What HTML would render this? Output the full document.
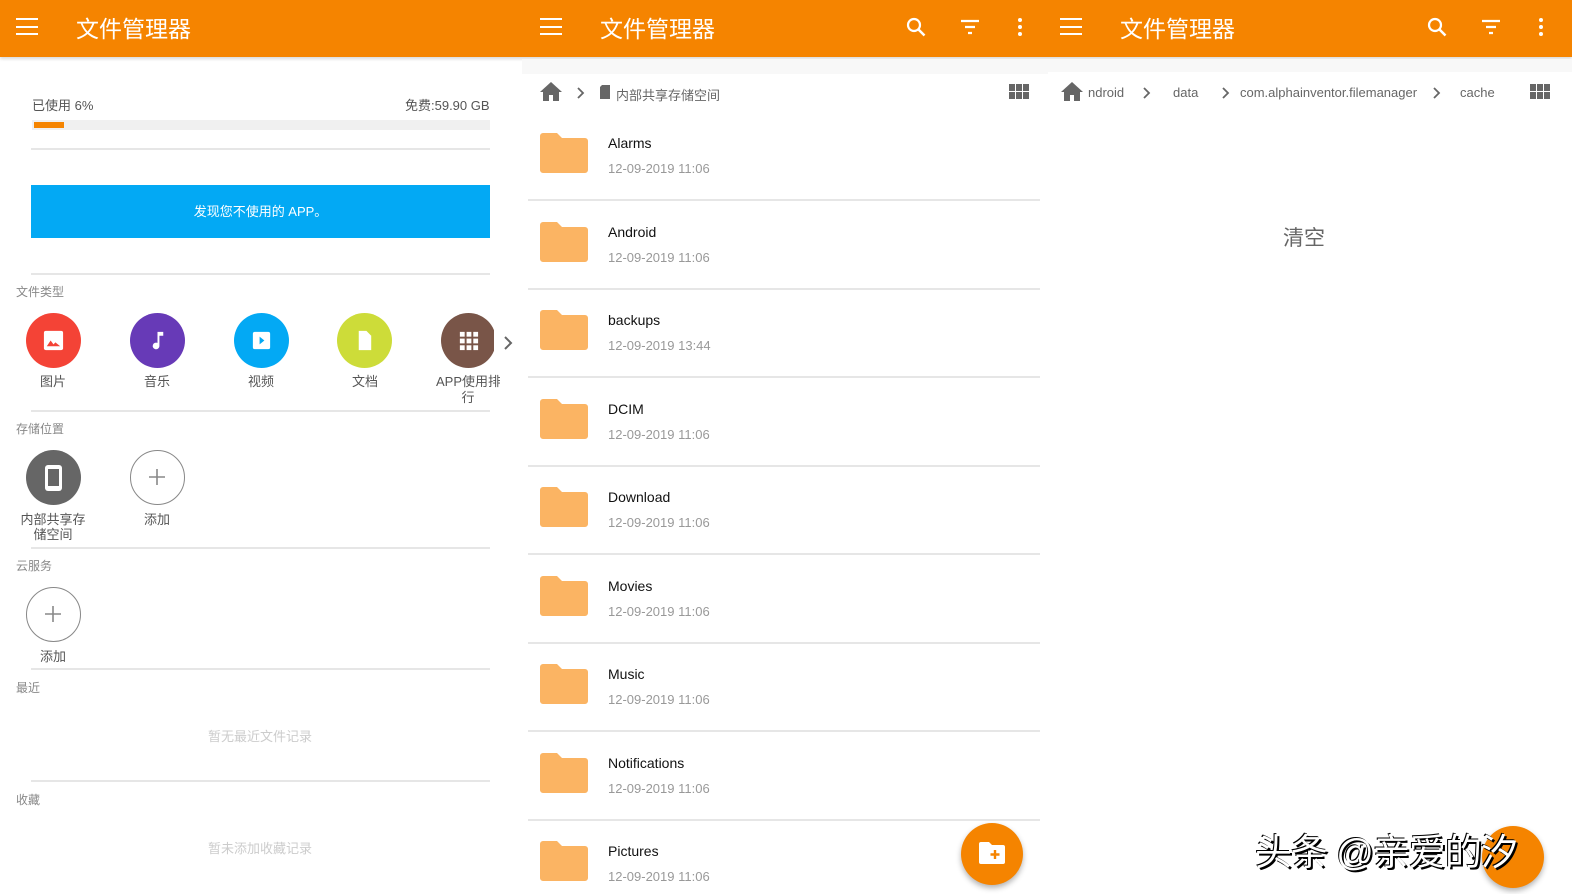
<!DOCTYPE html>
<html><head><meta charset="utf-8"><style>
*{margin:0;padding:0;box-sizing:border-box}
body{width:1572px;height:894px;background:#fff;font-family:"Liberation Sans","Noto Sans CJK SC",sans-serif;position:relative;overflow:hidden}
.a{position:absolute}
.hdr{position:absolute;top:0;height:57px;background:#f58400}
.ttl{position:absolute;top:10px;color:#fff;font-size:23px}
.ham{position:absolute;top:18px;width:22px;height:17px;border-top:2.5px solid #fff;border-bottom:2.5px solid #fff}
.ham:after{content:"";position:absolute;left:0;right:0;top:5.5px;border-top:2.5px solid #fff}
.line{position:absolute;height:2px;background:#e6e6e6}
.circ{position:absolute;width:55px;height:55px;border-radius:50%}
.lbl{position:absolute;font-size:13px;color:#555;text-align:center;width:90px;line-height:15px}
.sec{position:absolute;left:16px;font-size:12px;color:#888}
.d{position:absolute;left:608px;font-size:13px;color:#999}
.fold{position:absolute;left:540px;width:48px;height:40px}
</style></head><body>
<div class="hdr" style="left:0;width:1572px;box-shadow:0 2px 3px rgba(0,0,0,.15)"></div>
<div class="ham" style="left:16px"></div><div class="ttl" style="left:76px">文件管理器</div>
<div class="ham" style="left:540px"></div><div class="ttl" style="left:600px">文件管理器</div>
<div class="ham" style="left:1060px"></div><div class="ttl" style="left:1120px">文件管理器</div>
<svg class="a" style="left:904px;top:15px" width="24" height="24" viewBox="0 0 24 24"><circle cx="10" cy="10" r="6" fill="none" stroke="#fff" stroke-width="2.2"/><path d="M14.5 14.5l6 6" stroke="#fff" stroke-width="2.5"/></svg>
<svg class="a" style="left:958px;top:15px" width="24" height="24" viewBox="0 0 24 24"><path d="M3 6h18M7 12h10M10 18h4" stroke="#fff" stroke-width="2.2"/></svg>
<svg class="a" style="left:1008px;top:15px" width="24" height="24" viewBox="0 0 24 24"><circle cx="12" cy="5" r="2" fill="#fff"/><circle cx="12" cy="12" r="2" fill="#fff"/><circle cx="12" cy="19" r="2" fill="#fff"/></svg>
<svg class="a" style="left:1425px;top:15px" width="24" height="24" viewBox="0 0 24 24"><circle cx="10" cy="10" r="6" fill="none" stroke="#fff" stroke-width="2.2"/><path d="M14.5 14.5l6 6" stroke="#fff" stroke-width="2.5"/></svg>
<svg class="a" style="left:1479px;top:15px" width="24" height="24" viewBox="0 0 24 24"><path d="M3 6h18M7 12h10M10 18h4" stroke="#fff" stroke-width="2.2"/></svg>
<svg class="a" style="left:1529px;top:15px" width="24" height="24" viewBox="0 0 24 24"><circle cx="12" cy="5" r="2" fill="#fff"/><circle cx="12" cy="12" r="2" fill="#fff"/><circle cx="12" cy="19" r="2" fill="#fff"/></svg>
<div class="a" style="left:522px;top:59px;width:526px;height:15px;background:#f8f8f8"></div>
<div class="a" style="left:1048px;top:59px;width:524px;height:13px;background:#f8f8f8"></div>

<div class="a" style="left:32px;top:95px;font-size:13px;color:#555">已使用 6%</div>
<div class="a" style="left:405px;top:95px;font-size:13px;color:#555">免费:59.90 GB</div>
<div class="a" style="left:32px;top:120px;width:458px;height:10px;background:#f0f0f0"></div>
<div class="a" style="left:34px;top:122px;width:30px;height:6px;background:#f58400"></div>
<div class="line" style="left:31px;top:148px;width:459px"></div>
<div class="a" style="left:31px;top:185px;width:459px;height:53px;background:#03a9f4;color:#fff;font-size:13px;text-align:center;line-height:53px">发现您不使用的 APP。</div>
<div class="line" style="left:31px;top:273px;width:459px"></div>
<div class="sec" style="top:283px">文件类型</div>
<div class="circ" style="left:26px;top:313px;background:#f44336"></div>
<svg class="a" style="left:42px;top:329px" width="23" height="23" viewBox="0 0 24 24"><rect x="2" y="2" width="20" height="20" rx="2" fill="#fff"/><path d="M5 18l4-6 3 4 2-2 5 4z" fill="#f44336"/></svg>
<div class="circ" style="left:130px;top:313px;background:#673ab7"></div>
<svg class="a" style="left:146px;top:329px" width="23" height="23" viewBox="0 0 24 24"><path d="M12 3v11.5A3.5 3.5 0 1 0 14 18V7h4V3z" fill="#fff"/></svg>
<div class="circ" style="left:234px;top:313px;background:#03a9f4"></div>
<svg class="a" style="left:250px;top:329px" width="23" height="23" viewBox="0 0 24 24"><rect x="3" y="3" width="18" height="18" rx="2" fill="#fff"/><path d="M10 8l5 4-5 4z" fill="#03a9f4"/></svg>
<div class="circ" style="left:337px;top:313px;background:#cddc39"></div>
<svg class="a" style="left:353px;top:329px" width="23" height="23" viewBox="0 0 24 24"><path d="M6 2h8l5 5v15H6z" fill="#fff"/></svg>
<div class="circ" style="left:441px;top:313px;background:#795548"></div>
<svg class="a" style="left:457px;top:329px" width="23" height="23" viewBox="0 0 24 24" fill="#fff"><rect x="3" y="3" width="5" height="5"/><rect x="10" y="3" width="5" height="5"/><rect x="17" y="3" width="5" height="5"/><rect x="3" y="10" width="5" height="5"/><rect x="10" y="10" width="5" height="5"/><rect x="17" y="10" width="5" height="5"/><rect x="3" y="17" width="5" height="5"/><rect x="10" y="17" width="5" height="5"/><rect x="17" y="17" width="5" height="5"/></svg>
<div class="a" style="left:494px;top:300px;width:28px;height:110px;background:#fff"></div>
<svg class="a" style="left:500px;top:334px" width="16" height="18" viewBox="0 0 16 18"><path d="M5 3l6 6-6 6" fill="none" stroke="#666" stroke-width="2"/></svg>
<div class="lbl" style="left:8px;top:374px">图片</div>
<div class="lbl" style="left:112px;top:374px">音乐</div>
<div class="lbl" style="left:216px;top:374px">视频</div>
<div class="lbl" style="left:320px;top:374px">文档</div>
<div class="lbl" style="left:436px;top:374px;width:64px;overflow:hidden;white-space:nowrap">APP使用排</div>
<div class="lbl" style="left:423px;top:390px">行</div>
<div class="line" style="left:31px;top:410px;width:459px"></div>
<div class="sec" style="top:420px">存储位置</div>
<div class="circ" style="left:26px;top:450px;background:#666"></div>
<div class="a" style="left:45px;top:465px;width:17px;height:26px;border-radius:3px;background:#fff"></div>
<div class="a" style="left:48px;top:469px;width:11px;height:17px;background:#666"></div>
<div class="circ" style="left:130px;top:450px;border:1.5px solid #888"></div>
<svg class="a" style="left:147px;top:467px" width="20" height="20" viewBox="0 0 20 20"><path d="M10 2v16M2 10h16" stroke="#888" stroke-width="1.6"/></svg>
<div class="lbl" style="left:8px;top:512px">内部共享存<br>储空间</div>
<div class="lbl" style="left:112px;top:512px">添加</div>
<div class="line" style="left:31px;top:547px;width:459px"></div>
<div class="sec" style="top:557px">云服务</div>
<div class="circ" style="left:26px;top:587px;border:1.5px solid #888"></div>
<svg class="a" style="left:43px;top:604px" width="20" height="20" viewBox="0 0 20 20"><path d="M10 2v16M2 10h16" stroke="#888" stroke-width="1.6"/></svg>
<div class="lbl" style="left:8px;top:649px">添加</div>
<div class="line" style="left:31px;top:668px;width:459px"></div>
<div class="sec" style="top:679px">最近</div>
<div class="a" style="left:208px;top:726px;font-size:13px;color:#ccc">暂无最近文件记录</div>
<div class="line" style="left:31px;top:780px;width:459px"></div>
<div class="sec" style="top:791px">收藏</div>
<div class="a" style="left:208px;top:838px;font-size:13px;color:#ccc">暂未添加收藏记录</div>

<svg class="a" style="left:539px;top:81px" width="24" height="22" viewBox="0 0 24 22"><path d="M12 1L1 11h3v9h6v-6h4v6h6v-9h3z" fill="#666"/></svg>
<svg class="a" style="left:575px;top:86px" width="12" height="14" viewBox="0 0 12 14"><path d="M3 2l5 5-5 5" fill="none" stroke="#666" stroke-width="1.8"/></svg>
<svg class="a" style="left:599px;top:85px" width="12" height="14" viewBox="0 0 12 14"><path d="M3 0h8v14H1V2z" fill="#666"/></svg>
<div class="a" style="left:616px;top:85px;font-size:13px;color:#666">内部共享存储空间</div>
<svg class="a" style="left:1009px;top:84px" width="20" height="16" viewBox="0 0 20 16" fill="#666"><rect x="0" y="0" width="6" height="7"/><rect x="7" y="0" width="6" height="7"/><rect x="14" y="0" width="6" height="7"/><rect x="0" y="8" width="6" height="7"/><rect x="7" y="8" width="6" height="7"/><rect x="14" y="8" width="6" height="7"/></svg>

<div id="rows"></div>
<script>
var n=["Alarms","Android","backups","DCIM","Download","Movies","Music","Notifications","Pictures"];
var dt=["11:06","11:06","13:44","11:06","11:06","11:06","11:06","11:06","11:06"];
var h="";
for(var i=0;i<9;i++){var y=142+i*88.5;
h+='<svg class="fold" style="top:'+(y-9)+'px" viewBox="0 0 48 40"><path d="M3 0h14l5 5h23a3 3 0 0 1 3 3v29a3 3 0 0 1-3 3H3a3 3 0 0 1-3-3V3a3 3 0 0 1 3-3z" fill="#fbb463"/></svg>';
h+='<div class="a" style="left:608px;top:'+(y-7)+'px;font-size:14px;color:#111">'+n[i]+'</div>';
h+='<div class="d" style="top:'+(y+19)+'px">12-09-2019 '+dt[i]+'</div>';
if(i<8)h+='<div class="line" style="left:528px;top:'+(y+57)+'px;width:512px"></div>';}
document.getElementById("rows").innerHTML=h;
</script>
<div class="a" style="left:961px;top:823px;width:62px;height:62px;border-radius:50%;background:#f58400;box-shadow:0 3px 6px rgba(0,0,0,.3)"></div>
<svg class="a" style="left:979px;top:842px" width="26" height="22" viewBox="0 0 26 22"><path d="M2 0h8l3 3h11a2 2 0 0 1 2 2v15a2 2 0 0 1-2 2H2a2 2 0 0 1-2-2V2a2 2 0 0 1 2-2z" fill="#fff"/><path d="M16 8v9M11.5 12.5h9" stroke="#f58400" stroke-width="2.4"/></svg>

<svg class="a" style="left:1060px;top:81px" width="24" height="22" viewBox="0 0 24 22"><path d="M12 1L1 11h3v9h6v-6h4v6h6v-9h3z" fill="#666"/></svg>
<div class="a" style="left:1088px;top:85px;font-size:13px;color:#666">ndroid</div>
<svg class="a" style="left:1141px;top:86px" width="12" height="14" viewBox="0 0 12 14"><path d="M3 2l5 5-5 5" fill="none" stroke="#666" stroke-width="1.8"/></svg>
<div class="a" style="left:1173px;top:85px;font-size:13px;color:#666">data</div>
<svg class="a" style="left:1220px;top:86px" width="12" height="14" viewBox="0 0 12 14"><path d="M3 2l5 5-5 5" fill="none" stroke="#666" stroke-width="1.8"/></svg>
<div class="a" style="left:1240px;top:85px;font-size:13px;color:#666">com.alphainventor.filemanager</div>
<svg class="a" style="left:1431px;top:86px" width="12" height="14" viewBox="0 0 12 14"><path d="M3 2l5 5-5 5" fill="none" stroke="#666" stroke-width="1.8"/></svg>
<div class="a" style="left:1460px;top:85px;font-size:13px;color:#666">cache</div>
<svg class="a" style="left:1530px;top:84px" width="20" height="16" viewBox="0 0 20 16" fill="#666"><rect x="0" y="0" width="6" height="7"/><rect x="7" y="0" width="6" height="7"/><rect x="14" y="0" width="6" height="7"/><rect x="0" y="8" width="6" height="7"/><rect x="7" y="8" width="6" height="7"/><rect x="14" y="8" width="6" height="7"/></svg>
<div class="a" style="left:1283px;top:222px;font-size:21px;color:#666">清空</div>
<div class="a" style="left:1482px;top:826px;width:62px;height:62px;border-radius:50%;background:#f58400;box-shadow:0 3px 6px rgba(0,0,0,.3)"></div>
<div class="a" style="left:1255px;top:822px;font-size:37px;color:#fff;text-shadow:2px 2px 0 #000,-1px -1px 0 #000;letter-spacing:-1px">头条 @亲爱的汐</div>
</body></html>
